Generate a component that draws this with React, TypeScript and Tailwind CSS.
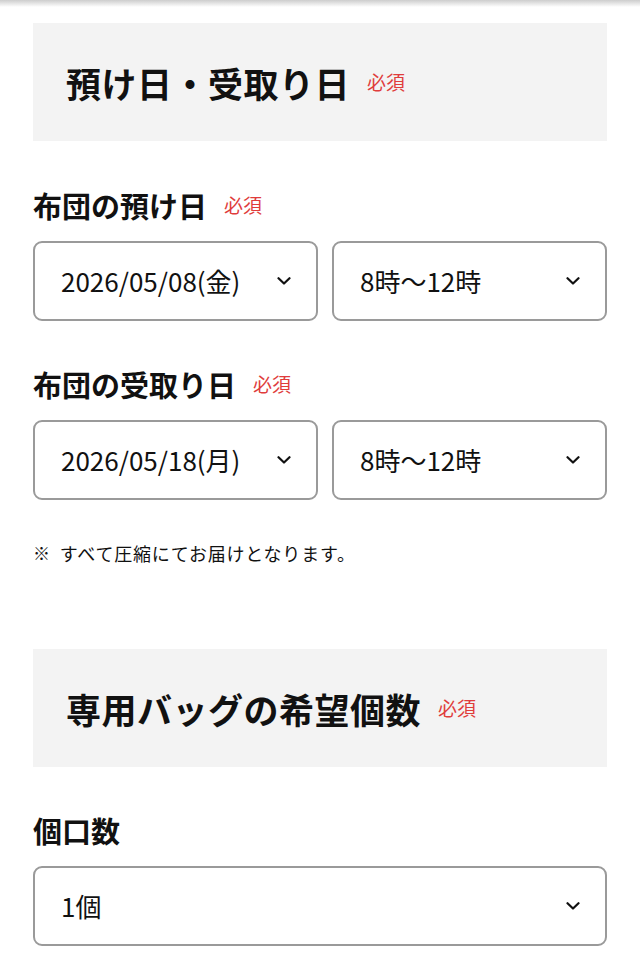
const FONT = { fontFamily: '"Noto Sans CJK JP", "Noto Sans", sans-serif' };

function Required() {
  return <span className="ml-[17px] text-[19px] font-normal text-[#e03c3c]">必須</span>;
}

function SectionHeader({ title, className = "" }: { title: string; className?: string }) {
  return (
    <div className={`flex h-[118px] items-center bg-[#f3f3f3] pl-[33px] ${className}`}>
      <h2 className="text-[35px] font-bold leading-none tracking-[0.5px] text-[#111]">{title}</h2>
      <Required />
    </div>
  );
}

function Label({ text, required, className = "" }: { text: string; required?: boolean; className?: string }) {
  return (
    <div className={`flex h-[42px] items-center ${className}`}>
      <span className="text-[29px] font-bold leading-none text-[#111]">{text}</span>
      {required && <Required />}
    </div>
  );
}

function Chevron() {
  return (
    <svg width="14" height="8" viewBox="0 0 14 8" fill="none" className="shrink-0">
      <path d="M1.5 1.2 7 6.5l5.5-5.3" stroke="#111" strokeWidth="2.2" strokeLinecap="round" strokeLinejoin="round" />
    </svg>
  );
}

function Select({ value, className = "" }: { value: string; className?: string }) {
  return (
    <div
      className={`flex h-[80px] items-center justify-between rounded-[9px] border-2 border-[#9a9a9a] bg-white pl-[26px] pr-[25px] ${className}`}
    >
      <span className="text-[26px] leading-none text-[#111]">{value}</span>
      <Chevron />
    </div>
  );
}

export default function App() {
  return (
    <main className="min-h-screen bg-white" style={FONT}>
      <div className="h-[7px] bg-gradient-to-b from-[#cdcdcd] to-white" />
      <div className="px-[33px] pb-10">
        <SectionHeader title="預け日・受取り日" className="mt-[16px]" />

        <Label text="布団の預け日" required className="mt-[43px]" />
        <div className="mt-[15px] flex gap-[14px]">
          <Select value="2026/05/08(金)" className="w-[285px]" />
          <Select value="8時〜12時" className="flex-1" />
        </div>

        <Label text="布団の受取り日" required className="mt-[42px]" />
        <div className="mt-[15px] flex gap-[14px]">
          <Select value="2026/05/18(月)" className="w-[285px]" />
          <Select value="8時〜12時" className="flex-1" />
        </div>

        <p className="mt-[39px] flex items-center text-[18px] leading-[28px] tracking-[0.8px] text-[#111]">
          <span className="mr-[9px] text-[17px]">※</span>すべて圧縮にてお届けとなります。
        </p>

        <SectionHeader title="専用バッグの希望個数" className="mt-[82px]" />

        <Label text="個口数" className="mt-[42px]" />
        <Select value="1個" className="mt-[15px]" />
      </div>
    </main>
  );
}
